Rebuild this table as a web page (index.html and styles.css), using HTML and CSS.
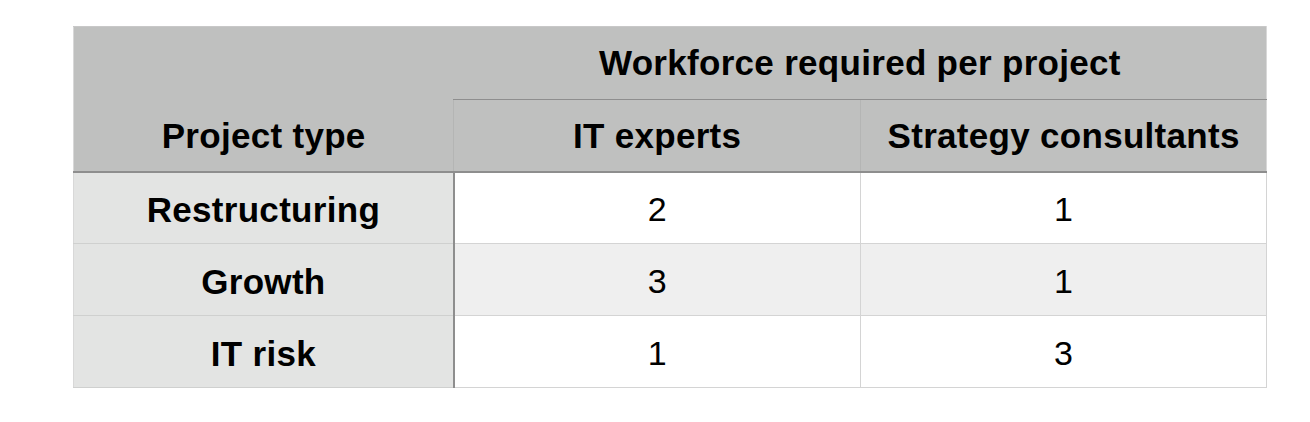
FILE: index.html
```html
<!DOCTYPE html>
<html>
<head>
<meta charset="utf-8">
<link rel="stylesheet" href="styles.css">
</head>
<body>
<table class="grid">
  <colgroup>
    <col class="c1"><col class="c2"><col class="c3">
  </colgroup>
  <thead>
    <tr class="h1">
      <th class="corner"></th>
      <th class="group" colspan="2">Workforce required per project</th>
    </tr>
    <tr class="h2">
      <th class="ptype">Project type</th>
      <th class="sub">IT experts</th>
      <th class="sub last">Strategy consultants</th>
    </tr>
  </thead>
  <tbody>
    <tr class="r odd">
      <th class="rowh">Restructuring</th>
      <td>2</td>
      <td class="last">1</td>
    </tr>
    <tr class="r even">
      <th class="rowh">Growth</th>
      <td>3</td>
      <td class="last">1</td>
    </tr>
    <tr class="r odd">
      <th class="rowh">IT risk</th>
      <td>1</td>
      <td class="last">3</td>
    </tr>
  </tbody>
</table>
</body>
</html>
```

FILE: styles.css
```css
html, body {
  margin: 0;
  padding: 0;
  background: #ffffff;
}
body {
  padding: 26px 0 0 73px;
  font-family: "Liberation Sans", Arial, Helvetica, sans-serif;
  color: #000;
}
.grid {
  border-collapse: collapse;
  table-layout: fixed;
  width: 1193px;
}
.c1 { width: 380px; }
.c2 { width: 407px; }
.c3 { width: 406px; }
.grid th, .grid td {
  padding: 0;
  text-align: center;
  vertical-align: middle;
  font-size: 34px;
}
.grid th {
  font-size: 35px;
  font-weight: bold;
  letter-spacing: 0.3px;
  text-indent: 0.3px;
}
.grid td { font-weight: normal; }
.h1 th, .h2 th {
  background: #bfc0bf;
}
.h1 { height: 73px; }
.h2 { height: 72px; }
.r { height: 72px; }
.corner {
  border-left: 1px solid #d8d8d8;
  border-top: 1px solid #c8c8c8;
}
.group {
  border-top: 1px solid #c8c8c8;
  border-right: 1px solid #d8d8d8;
  border-bottom: 1px solid #8e8e8e;
  padding-top: 2px;
}
.ptype {
  border-left: 1px solid #d8d8d8;
  border-bottom: 2px solid #8e8e8e;
}
.grid .h2 th { padding-top: 2px; }
.sub {
  border-left: 1px solid #b4b5b4;
  border-bottom: 2px solid #8e8e8e;
}
.sub.last { border-right: 1px solid #d8d8d8; }
.grid .r th, .grid .r td { padding-top: 4px; }
.rowh {
  background: #e3e4e3;
  border-left: 1px solid #d8d8d8;
  border-right: 2px solid #8e8e8e;
  border-bottom: 1px solid #cfd0cf;
}
.r td {
  border-left: 1px solid #d4d4d4;
  border-bottom: 1px solid #d4d4d4;
}
.r td.last { border-right: 1px solid #d4d4d4; }
.odd td { background: #ffffff; }
.even td { background: #efefef; }
```
